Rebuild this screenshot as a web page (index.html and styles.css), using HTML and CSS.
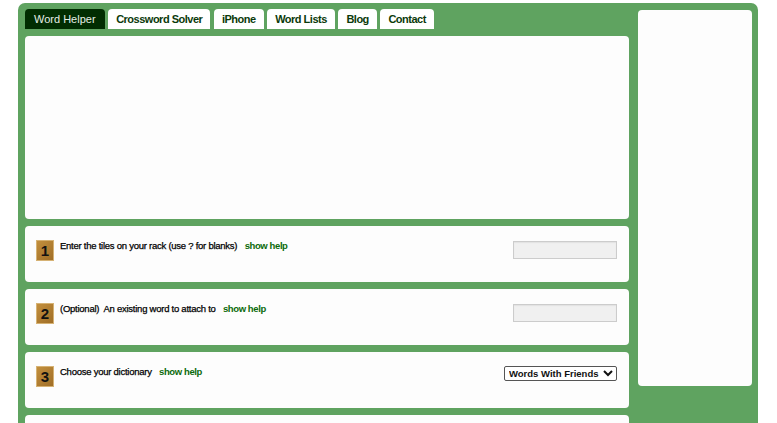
FILE: index.html
```html
<!DOCTYPE html>
<html lang="en">
<head>
    <meta charset="UTF-8">
    <meta name="viewport" content="width=device-width, initial-scale=1.0">
    <title>Word Helper</title>
    <link rel="stylesheet" href="styles.css">
</head>
<body>
    <div class="frame">
        <div class="main">
            <nav class="tabs">
                <a href="/" class="tab active">Word Helper</a>
                <a href="/crossword" class="tab">Crossword Solver</a>
                <a href="/iphone" class="tab">iPhone</a>
                <a href="/lists" class="tab">Word Lists</a>
                <a href="/blog" class="tab">Blog</a>
                <a href="/contact" class="tab">Contact</a>
            </nav>

            <div class="panel banner"></div>

            <div class="panel step">
                <div class="tile">1</div>
                <div class="label">Enter the tiles on your rack (use ? for blanks) <a href="#" class="help">show help</a></div>
                <input type="text" class="field">
            </div>

            <div class="panel step">
                <div class="tile">2</div>
                <div class="label">(Optional)&nbsp; An existing word to attach to <a href="#" class="help">show help</a></div>
                <input type="text" class="field">
            </div>

            <div class="panel step">
                <div class="tile">3</div>
                <div class="label">Choose your dictionary <a href="#" class="help">show help</a></div>
                <select class="dict">
                    <option>Words With Friends</option>
                    <option>Scrabble US</option>
                    <option>Scrabble UK</option>
                </select>
            </div>

            <div class="panel step last"></div>
        </div>

        <div class="side"></div>
    </div>
</body>
</html>
```

FILE: styles.css
```css
body {
    margin: 0;
    background-color: #ffffff;
    font-family: "Liberation Sans", Arial, sans-serif;
    overflow: hidden;
}
.frame {
    display: flex;
    gap: 9px;
    width: 727px;
    height: 440px;
    margin: 3px 0 0 18px;
    padding: 6px 6px 0 7px;
    background-color: #5fa360;
    border-radius: 7px 7px 0 0;
}
.main {
    width: 604px;
    display: flex;
    flex-direction: column;
    gap: 7px;
}
.tabs {
    display: flex;
    gap: 3.6px;
    height: 20px;
}
.tab {
    display: flex;
    align-items: center;
    padding: 0 8px;
    background-color: #ffffff;
    border-radius: 4px 4px 0 0;
    color: #0b3a0b;
    font-size: 11px;
    font-weight: bold;
    letter-spacing: -0.5px;
    text-decoration: none;
}
.tab.active {
    padding: 0 9px;
    background-color: #012d01;
    color: #e6ede6;
    font-weight: normal;
    letter-spacing: 0;
}
.panel {
    background-color: #fdfdfd;
    border-radius: 4px;
}
.banner {
    height: 183px;
}
.step {
    height: 56px;
    display: flex;
    align-items: flex-start;
    padding: 0 12px 0 11px;
}
.step.last {
    height: 30px;
    border-radius: 4px 4px 0 0;
}
.tile {
    width: 18px;
    height: 21px;
    margin-top: 14px;
    margin-right: 6px;
    background: linear-gradient(135deg, #c4913e, #9e6c26);
    box-shadow: inset 0 0 0 1px #d6b274;
    color: #111111;
    font-size: 15px;
    font-weight: bold;
    text-align: center;
    line-height: 22px;
}
.label {
    flex: 1;
    margin-top: 14px;
    font-size: 9.5px;
    color: #000000;
    letter-spacing: -0.25px;
    -webkit-text-stroke: 0.25px #000000;
}
.help {
    margin-left: 5px;
    color: #0b6a0b;
    font-weight: bold;
    letter-spacing: -0.4px;
    text-decoration: none;
    -webkit-text-stroke: 0;
}
.field {
    width: 102px;
    height: 16px;
    margin-top: 15px;
    padding: 0;
    background-color: #f0f0f0;
    border: 1px solid #cccccc;
    box-shadow: inset 0 1px 1px #e2e2e2;
}
.dict {
    width: 113px;
    height: 15px;
    margin-top: 14px;
    padding: 0;
    font-family: "Liberation Sans", Arial, sans-serif;
    font-size: 9.5px;
    font-weight: bold;
    color: #111111;
    background-color: #ffffff;
    border: 1px solid #555555;
    border-radius: 2px;
}
.side {
    width: 114px;
    height: 376px;
    margin-top: 1px;
    background-color: #fdfdfd;
    border-radius: 4px;
}
```
